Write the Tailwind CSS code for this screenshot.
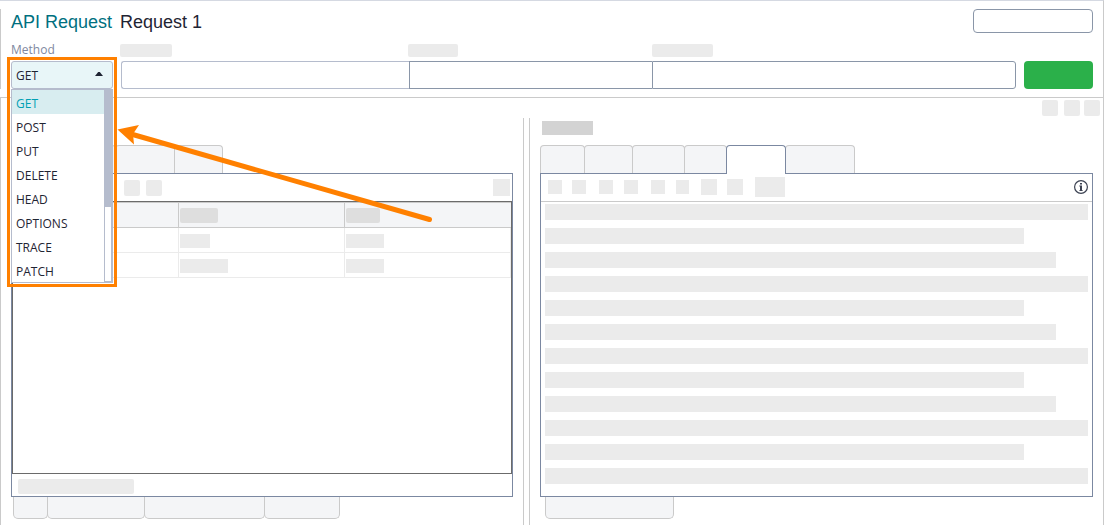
<!DOCTYPE html>
<html lang="en">
<head>
  <meta charset="UTF-8">
  <meta name="viewport" content="width=device-width, initial-scale=1.0">
  <script src="https://cdn.jsdelivr.net/npm/@tailwindcss/browser@4"></script>
  <title>API Request</title>
</head>
<body class="bg-white font-['Open_Sans',sans-serif] text-xs text-[#1f2433]">
  <main class="relative flex min-h-screen flex-col border-t border-r border-t-[#d5d9e2] border-r-[#cacaca]">

    <!-- Request header -->
    <header class="mt-2 border-l border-[#cacaca] px-[10px]">
      <div class="flex h-6 items-center justify-between">
        <h1 class="flex gap-2 pt-0.5 font-['Liberation_Sans',sans-serif] text-lg leading-6"><span class="text-[#00707f]">API Request</span><span>Request 1</span></h1>
        <button type="button" aria-label="Environment" class="h-6 w-[120px] rounded border border-[#8a96a8] bg-white"></button>
      </div>

      <form class="mt-[11px] flex items-end gap-2">
        <div class="relative w-[102px]">
          <label for="method" class="mb-1 block pb-0.5 leading-[11px] text-[#8088a0]">Method</label>
          <select id="method" class="block h-7 w-full appearance-none rounded-[3px] border border-[#b5bccd] bg-[#e8f6f8] pt-0.5 pl-1">
            <option>GET</option>
            <option>POST</option>
            <option>PUT</option>
            <option>DELETE</option>
            <option>HEAD</option>
            <option>OPTIONS</option>
            <option>TRACE</option>
            <option>PATCH</option>
          </select>
          <svg class="pointer-events-none absolute right-[10px] bottom-[13px] h-1 w-2" viewBox="0 0 8 4"><path d="M0 4 L3.2 0 H4.8 L8 4 Z" fill="#1f2433"/></svg>

          <!-- Open method list -->
          <div class="absolute top-full left-0 z-10 flex w-full border border-[#b5bccd] bg-white">
            <ul class="flex-1 leading-6">
              <li><button type="button" class="block h-6 w-full bg-[#d8edf0] pt-0.5 pl-1 text-left text-[#00a0b4]">GET</button></li>
              <li><button type="button" class="block h-6 w-full pt-0.5 pl-1 text-left">POST</button></li>
              <li><button type="button" class="block h-6 w-full pt-0.5 pl-1 text-left">PUT</button></li>
              <li><button type="button" class="block h-6 w-full pt-0.5 pl-1 text-left">DELETE</button></li>
              <li><button type="button" class="block h-6 w-full pt-0.5 pl-1 text-left">HEAD</button></li>
              <li><button type="button" class="block h-6 w-full pt-0.5 pl-1 text-left">OPTIONS</button></li>
              <li><button type="button" class="block h-6 w-full pt-0.5 pl-1 text-left">TRACE</button></li>
              <li><button type="button" class="block h-6 w-full pt-0.5 pl-1 text-left">PATCH</button></li>
            </ul>
            <div class="w-2 border border-[#b5bccd]"><div class="h-[116px] bg-[#b5bccd]"></div></div>
          </div>

          <div class="pointer-events-none absolute -right-1 -left-1 top-[13px] z-20 h-[230px] border-3 border-[#ff8000]"></div>
          <svg class="pointer-events-none absolute top-[80px] left-[106px] z-20 h-[104px] w-[318px]" viewBox="0 0 318 104">
            <path d="M14 10 L312.5 95.5" stroke="#ff8000" stroke-width="5" stroke-linecap="round"/>
            <path d="M0.5 5.5 L22 1 L16 10 L17 20.5 Z" fill="#ff8000"/>
          </svg>
        </div>

        <div class="flex flex-1">
          <div class="flex-[288]">
            <label for="endpoint" aria-label="Endpoint" class="mb-1 -ml-px block h-[13px] w-[52px] rounded-xs bg-[#ebebeb]"></label>
            <input id="endpoint" type="text" class="block h-7 w-full rounded-l-[3px] border border-r-0 border-[#b5bccd]">
          </div>
          <div class="flex-[243]">
            <label for="resource" aria-label="Resource" class="mb-1 -ml-px block h-[13px] w-[50px] rounded-xs bg-[#ebebeb]"></label>
            <input id="resource" type="text" class="block h-7 w-full border border-r-0 border-[#8a96a8]">
          </div>
          <div class="flex-[364]">
            <label for="parameters" aria-label="Parameters" class="mb-1 block h-[13px] w-[61px] rounded-xs bg-[#ebebeb]"></label>
            <input id="parameters" type="text" class="block h-7 w-full rounded-r-[3px] border border-[#8a96a8]">
          </div>
        </div>
        <button type="submit" aria-label="Send" class="h-7 w-[69px] rounded bg-[#2bb04a]"></button>
      </form>
    </header>

    <section class="mt-2 flex flex-1 flex-col border-t border-l border-[#cacaca]">
      <div class="mt-0.5 flex justify-end pr-[3px]">
        <span class="mr-1.5 size-4 rounded-xs bg-[#ebebeb]"></span>
        <span class="mr-1 size-4 rounded-xs bg-[#ebebeb]"></span>
        <span class="size-4 rounded-xs bg-[#ebebeb]"></span>
      </div>

      <div class="mt-0.5 grid flex-1 grid-cols-[522fr_7px_573fr]">

        <!-- Request pane -->
        <div class="flex flex-col pt-[27px] pr-[10px] pb-1.5 pl-[10px]">
          <div class="flex">
            <button type="button" aria-label="Tab 1" class="h-7 w-[54px] rounded-t border border-b-0 border-[#cacaca] bg-[#f4f5f7]"></button>
            <button type="button" aria-label="Tab 2" class="-ml-px h-7 w-[52px] rounded-t border border-b-0 border-[#cacaca] bg-[#f4f5f7]"></button>
            <button type="button" aria-label="Tab 3" class="-ml-px h-7 w-[60px] rounded-t border border-b-0 border-[#cacaca] bg-[#f4f5f7]"></button>
            <button type="button" aria-label="Tab 4" class="-ml-px h-7 w-[49px] rounded-t border border-b-0 border-[#cacaca] bg-[#f4f5f7]"></button>
          </div>
          <div class="flex flex-1 flex-col border border-[#7b88a1]">
            <div class="flex h-[27px] items-center gap-1.5 pr-0.5 pl-28">
              <span class="size-4 rounded-xs bg-[#ebebeb]"></span>
              <span class="size-4 rounded-xs bg-[#ebebeb]"></span>
              <span class="ml-auto size-[17px] bg-[#ebebeb]"></span>
            </div>
            <div class="flex-1 border border-[#6b6b6b]">
              <table class="w-full table-fixed border-separate border-spacing-0">
                <thead>
                  <tr class="h-[26px] bg-[#f4f5f7]">
                    <th class="border-y border-r border-[#cacaca] p-0"></th>
                    <th class="border-y border-r border-[#cacaca] py-0 pr-0 pl-px"><div class="h-[15px] w-[38px] rounded-xs bg-[#dedede]"></div></th>
                    <th class="border-y border-[#cacaca] py-0 pr-0 pl-px"><div class="h-[15px] w-[34px] rounded-xs bg-[#dedede]"></div></th>
                  </tr>
                </thead>
                <tbody>
                  <tr class="h-[25px]">
                    <td class="border-r border-b border-[#ebebeb] p-0"></td>
                    <td class="border-r border-b border-[#ebebeb] pt-0.5 pr-0 pb-0 pl-px"><div class="h-[14px] w-[30px] bg-[#ebebeb]"></div></td>
                    <td class="border-r border-b border-[#ebebeb] pt-0.5 pr-0 pb-0 pl-px"><div class="h-[14px] w-[38px] bg-[#ebebeb]"></div></td>
                  </tr>
                  <tr class="h-[25px]">
                    <td class="border-r border-b border-[#ebebeb] p-0"></td>
                    <td class="border-r border-b border-[#ebebeb] pt-0.5 pr-0 pb-0 pl-px"><div class="h-[14px] w-[48px] bg-[#ebebeb]"></div></td>
                    <td class="border-r border-b border-[#ebebeb] pt-0.5 pr-0 pb-0 pl-px"><div class="h-[14px] w-[38px] bg-[#ebebeb]"></div></td>
                  </tr>
                </tbody>
              </table>
            </div>
            <div class="h-[22px] pt-[5px] pl-1.5"><div class="h-[15px] w-[116px] rounded-xs bg-[#ebebeb]"></div></div>
          </div>
          <div class="flex pl-0.5">
            <button type="button" aria-label="Auth" class="h-[22px] w-[35px] rounded-b-[5px] border border-t-0 border-[#cacaca] bg-[#f4f5f7]"></button>
            <button type="button" aria-label="Headers" class="-ml-px h-[22px] w-[98px] rounded-b-[5px] border border-t-0 border-[#cacaca] bg-[#f4f5f7]"></button>
            <button type="button" aria-label="Attachments" class="-ml-px h-[22px] w-[121px] rounded-b-[5px] border border-t-0 border-[#cacaca] bg-[#f4f5f7]"></button>
            <button type="button" aria-label="Assertions" class="-ml-px h-[22px] w-[76px] rounded-b-[5px] border border-t-0 border-[#cacaca] bg-[#f4f5f7]"></button>
          </div>
        </div>

        <div class="border-x border-[#cacaca]"></div>

        <!-- Response pane -->
        <div class="flex flex-col px-[10px] pt-[3px] pb-1.5">
          <div class="mb-[10px] ml-0.5 h-[14px] w-[51px] bg-[#d3d3d3]"></div>
          <div class="flex">
            <button type="button" aria-label="Tab 1" class="h-7 w-[45px] rounded-t border border-b-0 border-[#cacaca] bg-[#f4f5f7]"></button>
            <button type="button" aria-label="Tab 2" class="-ml-px h-7 w-[49px] rounded-t border border-b-0 border-[#cacaca] bg-[#f4f5f7]"></button>
            <button type="button" aria-label="Tab 3" class="-ml-px h-7 w-[53px] rounded-t border border-b-0 border-[#cacaca] bg-[#f4f5f7]"></button>
            <button type="button" aria-label="Tab 4" class="-ml-px h-7 w-[43px] rounded-t border border-b-0 border-[#cacaca] bg-[#f4f5f7]"></button>
            <button type="button" aria-label="Tab 5" class="relative z-10 -mb-px -ml-px h-[29px] w-[60px] rounded-t border border-b-0 border-[#7b88a1] bg-white"></button>
            <button type="button" aria-label="Tab 6" class="-ml-px h-7 w-[70px] rounded-t border border-b-0 border-[#cacaca] bg-[#f4f5f7]"></button>
          </div>
          <div class="flex-1 border border-[#7b88a1]">
            <div class="flex h-7 items-center border-b border-[#cacaca] pr-1 pb-px pl-[7px]">
              <span class="mr-[10px] size-[14px] bg-[#ebebeb]"></span>
              <span class="mr-[13px] size-[14px] bg-[#ebebeb]"></span>
              <span class="mr-[11px] size-[14px] bg-[#ebebeb]"></span>
              <span class="mr-[13px] size-[14px] bg-[#ebebeb]"></span>
              <span class="mr-[11px] size-[14px] bg-[#ebebeb]"></span>
              <span class="mr-3 h-[14px] w-[13px] bg-[#ebebeb]"></span>
              <span class="mr-[10px] size-4 bg-[#ebebeb]"></span>
              <span class="mr-3 size-4 bg-[#ebebeb]"></span>
              <span class="h-5 w-[30px] bg-[#ebebeb]"></span>
              <button type="button" aria-label="Info" class="ml-auto">
                <svg class="size-[14px]" viewBox="0 0 14 14" fill="none">
                  <circle cx="7" cy="7" r="6.4" stroke="#3c4252" stroke-width="1.2"/>
                  <path d="M6 3 H8 V4.6 H6 Z M5.3 5.6 H8 V10.2 H8.8 V11 H5.3 V10.2 H6 V6.4 H5.3 Z" fill="#3c4252"/>
                </svg>
              </button>
            </div>
            <div class="flex flex-col gap-2 px-1 pt-0.5 pb-3">
              <div class="h-4 bg-[#ebebeb]"></div>
              <div class="h-4 w-[88.2%] bg-[#ebebeb]"></div>
              <div class="h-4 w-[94.1%] bg-[#ebebeb]"></div>
              <div class="h-4 bg-[#ebebeb]"></div>
              <div class="h-4 w-[88.2%] bg-[#ebebeb]"></div>
              <div class="h-4 w-[94.1%] bg-[#ebebeb]"></div>
              <div class="h-4 bg-[#ebebeb]"></div>
              <div class="h-4 w-[88.2%] bg-[#ebebeb]"></div>
              <div class="h-4 w-[94.1%] bg-[#ebebeb]"></div>
              <div class="h-4 bg-[#ebebeb]"></div>
              <div class="h-4 w-[88.2%] bg-[#ebebeb]"></div>
              <div class="h-4 bg-[#ebebeb]"></div>
            </div>
          </div>
          <div class="flex pl-[5px]">
            <button type="button" aria-label="Headers" class="h-[22px] w-[129px] rounded-b-[5px] border border-t-0 border-[#cacaca] bg-[#f4f5f7]"></button>
          </div>
        </div>
      </div>
    </section>
  </main>
</body>
</html>
